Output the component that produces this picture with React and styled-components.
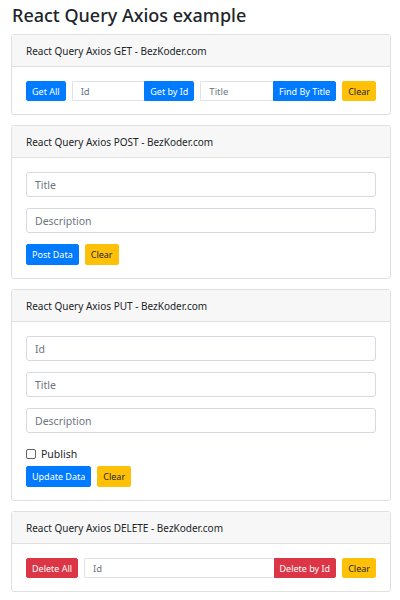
import styled, { createGlobalStyle } from 'styled-components'

const GlobalStyle = createGlobalStyle`
    body {
        margin: 0;
        background: #ffffff;
        font-family: 'Noto Sans', 'Open Sans', sans-serif;
        color: #212529;
    }
`

export default function App() {
    return (
        <>
            <GlobalStyle />
            <SCPage>
                <SCTitle>React Query Axios example</SCTitle>

                <SCCard>
                    <SCHeader>React Query Axios GET - BezKoder.com</SCHeader>
                    <SCBody>
                        <SCRow>
                            <SCButton $variant="primary">Get All</SCButton>
                            <SCGroup>
                                <SCGroupInput placeholder="Id" />
                                <SCGroupButton $variant="primary">Get by Id</SCGroupButton>
                            </SCGroup>
                            <SCGroup>
                                <SCGroupInput placeholder="Title" />
                                <SCGroupButton $variant="primary">Find By Title</SCGroupButton>
                            </SCGroup>
                            <SCButton $variant="warning">Clear</SCButton>
                        </SCRow>
                    </SCBody>
                </SCCard>

                <SCCard>
                    <SCHeader>React Query Axios POST - BezKoder.com</SCHeader>
                    <SCBody>
                        <SCInput placeholder="Title" />
                        <SCInput placeholder="Description" />
                        <SCButtons>
                            <SCButton $variant="primary">Post Data</SCButton>
                            <SCButton $variant="warning">Clear</SCButton>
                        </SCButtons>
                    </SCBody>
                </SCCard>

                <SCCard>
                    <SCHeader>React Query Axios PUT - BezKoder.com</SCHeader>
                    <SCBody>
                        <SCInput placeholder="Id" />
                        <SCInput placeholder="Title" />
                        <SCInput placeholder="Description" />
                        <SCCheck>
                            <SCCheckbox type="checkbox" />
                            Publish
                        </SCCheck>
                        <SCButtons>
                            <SCButton $variant="primary">Update Data</SCButton>
                            <SCButton $variant="warning">Clear</SCButton>
                        </SCButtons>
                    </SCBody>
                </SCCard>

                <SCCard>
                    <SCHeader>React Query Axios DELETE - BezKoder.com</SCHeader>
                    <SCBody>
                        <SCRow>
                            <SCButton $variant="danger">Delete All</SCButton>
                            <SCGroup>
                                <SCGroupInput placeholder="Id" />
                                <SCGroupButton $variant="danger">Delete by Id</SCGroupButton>
                            </SCGroup>
                            <SCButton $variant="warning">Clear</SCButton>
                        </SCRow>
                    </SCBody>
                </SCCard>
            </SCPage>
        </>
    )
}

const colors = {
    primary: { bg: '#007bff', fg: '#ffffff' },
    warning: { bg: '#ffc107', fg: '#212529' },
    danger: { bg: '#dc3545', fg: '#ffffff' },
}

const SCPage = styled.div`
    width: 380px;
    padding: 0 9px 0 11px;
`

const SCTitle = styled.h4`
    margin: 0;
    padding: 3px 0 0 1px;
    height: 34px;
    box-sizing: border-box;
    font-size: 18px;
    font-weight: 500;
    line-height: 24px;
`

const SCCard = styled.div`
    border: 1px solid #e0e0e0;
    border-radius: 3px;
    margin-bottom: 10px;
    background: #ffffff;
`

const SCHeader = styled.div`
    height: 31px;
    display: flex;
    align-items: center;
    padding: 0 14px;
    background: #f7f7f7;
    border-bottom: 1px solid #e0e0e0;
    font-size: 10px;
    color: #212529;
`

const SCBody = styled.div`
    padding: 14px 14px 13px;
    display: flex;
    flex-direction: column;
`

const SCRow = styled.div`
    display: flex;
    gap: 6px;
`

const SCButton = styled.button`
    height: 20px;
    padding: 0 5px;
    border: 1px solid ${p => colors[p.$variant].bg};
    border-radius: 2px;
    background: ${p => colors[p.$variant].bg};
    color: ${p => colors[p.$variant].fg};
    font-family: 'Noto Sans', sans-serif;
    font-size: 9px;
    white-space: nowrap;
    flex-shrink: 0;
`

const SCButtons = styled.div`
    display: flex;
    gap: 6px;
    ${SCButton} {
        height: 21px;
    }
`

const SCGroup = styled.div`
    display: flex;
    flex: 1 1 auto;
`

const SCGroupInput = styled.input`
    flex: 1 1 auto;
    width: 0;
    min-width: 0;
    height: 20px;
    box-sizing: border-box;
    padding: 0 8px;
    border: 1px solid #dfe3e8;
    border-right: none;
    border-radius: 2px 0 0 2px;
    font-family: 'Noto Sans', sans-serif;
    font-size: 9.5px;
    &::placeholder {
        color: #6c757d;
    }
`

const SCGroupButton = styled(SCButton)`
    border-radius: 0 2px 2px 0;
`

const SCInput = styled.input`
    height: 25px;
    box-sizing: border-box;
    margin-bottom: 11px;
    padding: 0 8px;
    border: 1px solid #d6dae0;
    border-radius: 3px;
    font-family: 'Noto Sans', sans-serif;
    font-size: 10.5px;
    &::placeholder {
        color: #6c757d;
    }
`

const SCCheck = styled.label`
    display: flex;
    align-items: center;
    gap: 5px;
    height: 14px;
    margin: 3px 0 5px;
    font-size: 10.5px;
`

const SCCheckbox = styled.input`
    appearance: none;
    width: 10px;
    height: 10px;
    margin: 0;
    border: 1px solid #5f6368;
    border-radius: 2px;
    background: #ffffff;
`
